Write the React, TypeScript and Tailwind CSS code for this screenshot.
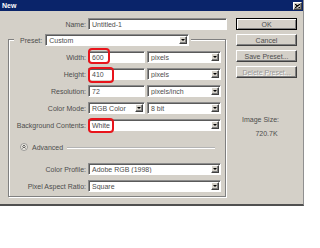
import React from 'react';

const raised =
  'border border-t-white border-l-white border-r-[#404040] border-b-[#404040] shadow-[inset_-1px_-1px_0_#808080]';
const sunken =
  'border border-t-[#8c8c8c] border-l-[#8c8c8c] border-r-white border-b-white shadow-[inset_1px_1px_0_#5a5a5a]';

const DropBtn: React.FC = () => (
  <div className={`mr-[1px] flex h-[8px] w-[8px] shrink-0 items-center justify-center bg-[#d4d0c8] ${raised}`}>
    <div className="h-0 w-0 border-l-[2px] border-r-[2px] border-t-[2px] border-l-transparent border-r-transparent border-t-black" />
  </div>
);

const Field: React.FC<{
  w: string;
  text: string;
  combo?: boolean;
  ring?: string;
}> = ({ w, text, combo, ring }) => (
  <div className={`relative flex h-[12px] shrink-0 items-center bg-white ${w} ${sunken}`}>
    <span className="flex-1 truncate pl-[3px] leading-none">{text}</span>
    {combo && <DropBtn />}
    {ring && <div className={`absolute rounded-[4px] border-2 border-[#e8141b] ${ring}`} />}
  </div>
);

const Row: React.FC<{ label: string; className?: string; children: React.ReactNode }> = ({
  label,
  className = 'mt-[5px]',
  children,
}) => (
  <div className={`flex h-[12px] items-center ${className}`}>
    <span className="w-[79px] shrink-0 pr-[2px] text-right leading-none">{label}</span>
    <div className="flex gap-[2px]">{children}</div>
  </div>
);

const Button: React.FC<{ label: string; primary?: boolean; disabled?: boolean }> = ({
  label,
  primary,
  disabled,
}) => (
  <div
    className={`flex h-[12px] w-[61px] items-center justify-center bg-[#d4d0c8] leading-none ${
      primary
        ? 'border border-black shadow-[inset_1px_1px_0_#fff,inset_-1px_-1px_0_#808080]'
        : raised
    } ${disabled ? 'text-[#9a9a9a] [text-shadow:1px_1px_0_#fff]' : ''}`}
  >
    {label}
  </div>
);

export default function App() {
  return (
    <div className="h-[248px] w-[320px] bg-white font-['Liberation_Sans',Arial,sans-serif] text-[7px] text-[#4d4d4d]">
      <div className="flex h-[206px] w-[304px] flex-col border-b-2 border-r border-b-[#505050] border-r-[#909090] bg-[#d4d0c8]">
        {/* title bar */}
        <div className="flex h-[11px] shrink-0 items-center justify-between bg-[#0a246a] pl-[2px] pr-[1px]">
          <span className="text-[7px] font-bold leading-none text-white">New</span>
          <div className={`flex h-[8px] w-[9px] items-center justify-center bg-[#d4d0c8] ${raised}`}>
            <svg width="5" height="4" viewBox="0 0 5 4">
              <path d="M0 0 L5 4 M5 0 L0 4" stroke="#000" strokeWidth="1.1" />
            </svg>
          </div>
        </div>

        <div className="flex pt-[7px]">
          {/* left column */}
          <div className="w-[227px] shrink-0">
            <div className="flex h-[12px] items-center">
              <span className="w-[88px] shrink-0 pr-[2px] text-right leading-none">Name:</span>
              <Field w="w-[139px]" text="Untitled-1" />
            </div>

            <div className="ml-[8px] mt-[9px] w-[218px] border border-[#808080] pb-[4px] shadow-[inset_1px_1px_0_#fff,1px_1px_0_#fff]">
              <div className="-mt-[6px] ml-[5px] flex w-fit items-center bg-[#d4d0c8] pl-[6px] pr-[2px]">
                <span className="mr-[3px] leading-none">Preset:</span>
                <Field w="w-[144px]" text="Custom" combo />
              </div>

              <Row label="Width:">
                <Field w="w-[57px]" text="600" ring="-left-[1px] -top-[4px] h-[16px] w-[22px]" />
                <Field w="w-[74px]" text="pixels" combo />
              </Row>
              <Row label="Height:">
                <Field w="w-[57px]" text="410" ring="-left-[1px] -top-[2px] h-[16px] w-[26px]" />
                <Field w="w-[74px]" text="pixels" combo />
              </Row>
              <Row label="Resolution:">
                <Field w="w-[57px]" text="72" />
                <Field w="w-[74px]" text="pixels/inch" combo />
              </Row>
              <Row label="Color Mode:">
                <Field w="w-[57px]" text="RGB Color" combo />
                <Field w="w-[74px]" text="8 bit" combo />
              </Row>
              <Row label="Background Contents:">
                <Field w="w-[133px]" text="White" combo ring="-left-[1px] -top-[2px] h-[15px] w-[26px]" />
              </Row>

              <div className="mt-[11px] flex h-[10px] items-center pl-[11px] pr-[10px]">
                <svg width="8" height="8" viewBox="0 0 8 8" className="shrink-0">
                  <circle cx="4" cy="4" r="3.5" fill="#ece9e2" stroke="#8a8a8a" strokeWidth="0.8" />
                  <path d="M2.4 3.6 L4 2.2 L5.6 3.6 M2.4 5.4 L4 4 L5.6 5.4" fill="none" stroke="#333" strokeWidth="0.8" />
                </svg>
                <span className="ml-[4px] leading-none">Advanced</span>
                <div className="ml-[4px] h-0 flex-1 border-t border-t-[#b4b4b4] shadow-[0_1px_0_#fff]" />
              </div>

              <Row label="Color Profile:" className="mt-[11px]">
                <Field w="w-[133px]" text="Adobe RGB (1998)" combo />
              </Row>
              <Row label="Pixel Aspect Ratio:">
                <Field w="w-[133px]" text="Square" combo />
              </Row>
            </div>
          </div>

          {/* right column */}
          <div className="ml-[9px] flex w-[61px] flex-col gap-[4px]">
            <Button label="OK" primary />
            <Button label="Cancel" />
            <Button label="Save Preset..." />
            <Button label="Delete Preset..." disabled />
            <div className="mt-[32px] flex h-[10px] items-center justify-center pr-[12px] leading-none">
              Image Size:
            </div>
            <div className="flex h-[10px] items-center justify-center leading-none">720.7K</div>
          </div>
        </div>
      </div>
    </div>
  );
}
